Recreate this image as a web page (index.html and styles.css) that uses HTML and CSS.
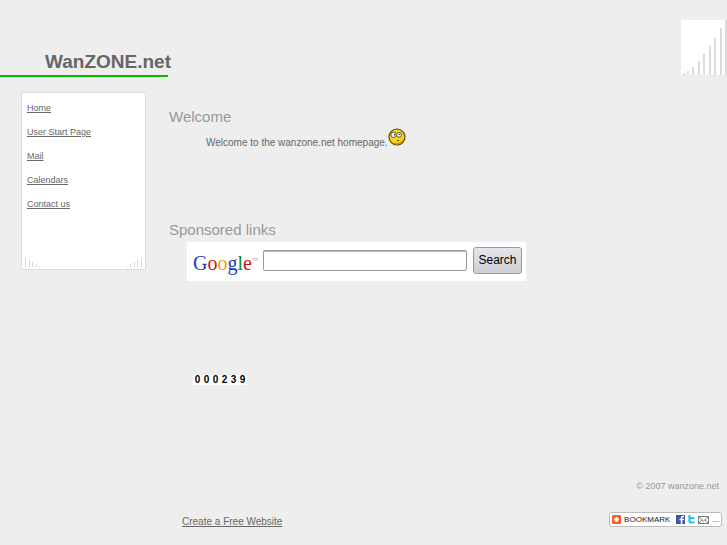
FILE: index.html
```html
<!DOCTYPE html>
<html lang="en">
<head>
  <meta charset="UTF-8">
  <meta name="viewport" content="width=device-width, initial-scale=1.0">
  <title>WanZONE.net</title>
  <link rel="stylesheet" href="styles.css">
</head>
<body>

  <header class="header">
    <div class="brand">
      <h1>WanZONE.net</h1>
    </div>
    <svg class="header-bars" width="46" height="56" viewBox="0 0 46 56" aria-hidden="true">
      <rect width="46" height="56" fill="#fff"/>
      <g fill="#dcdcdc">
        <rect x="2" y="53" width="2" height="2"/>
        <rect x="6" y="51" width="2" height="4"/>
        <rect x="11" y="47" width="2" height="8"/>
        <rect x="17" y="41" width="2" height="14"/>
        <rect x="22" y="34" width="2" height="21"/>
        <rect x="28" y="26" width="2" height="29"/>
        <rect x="33" y="18" width="2" height="37"/>
        <rect x="39" y="8" width="2" height="47"/>
        <rect x="44" y="0" width="2" height="55"/>
      </g>
      <path d="M0 55.5H46" stroke="#e8e8e8"/>
    </svg>
  </header>

  <div class="columns">
    <nav class="menu">
      <ul>
        <li><a href="#">Home</a></li>
        <li><a href="#">User Start Page</a></li>
        <li><a href="#">Mail</a></li>
        <li><a href="#">Calendars</a></li>
        <li><a href="#">Contact us</a></li>
      </ul>
      <div class="menu-bars">
        <svg width="15" height="10" viewBox="0 0 15 10" fill="#d8d8d8" aria-hidden="true">
          <rect x="0" y="0" width="1" height="10"/>
          <rect x="4" y="3" width="1" height="7"/>
          <rect x="7" y="5" width="1" height="5"/>
          <rect x="11" y="7" width="1" height="3"/>
          <rect x="14" y="9" width="1" height="1"/>
        </svg>
        <svg width="15" height="10" viewBox="0 0 15 10" fill="#d8d8d8" aria-hidden="true">
          <rect x="0" y="9" width="1" height="1"/>
          <rect x="3" y="7" width="1" height="3"/>
          <rect x="7" y="5" width="1" height="5"/>
          <rect x="10" y="3" width="1" height="7"/>
          <rect x="14" y="0" width="1" height="10"/>
        </svg>
      </div>
    </nav>

    <main class="content">
      <section class="welcome">
        <h2>Welcome</h2>
        <p>
          Welcome to the wanzone.net homepage.
          <svg width="18" height="18" viewBox="0 0 18 18" role="img" aria-label="smiley">
            <circle cx="9" cy="9" r="8" fill="#f8d616" stroke="#574600" stroke-width="1.2"/>
            <path d="M16.500 8Q15 14 9 15Q5 15.500 3 13.500Q5 16.600 9 16.600Q16 16 16.500 8Z" fill="#d09a00"/>
            <circle cx="5.6" cy="6.8" r="2.7" fill="#fff" stroke="#5b543a"/>
            <circle cx="11" cy="6.8" r="2.4" fill="#fff" stroke="#5b543a"/>
            <circle cx="6.6" cy="6.8" r=".8" fill="#222"/>
            <circle cx="11.4" cy="6.4" r=".7" fill="#222"/>
            <path d="M9 12.500h2" stroke="#5f3e00"/>
          </svg>
        </p>
      </section>

      <section class="sponsored">
        <h2>Sponsored links</h2>
        <form class="search">
          <label for="q" class="google"><span class="blue">G</span><span class="red">o</span><span class="yellow">o</span><span class="blue">g</span><span class="green">l</span><span class="red">e</span><sup>™</sup></label>
          <input type="text" id="q" name="q">
          <button type="submit">Search</button>
        </form>
      </section>

      <div class="counter">
        <span>0</span><span>0</span><span>0</span><span>2</span><span>3</span><span>9</span>
      </div>
    </main>
  </div>

  <footer class="footer">
    <p>© 2007 wanzone.net</p>
    <div class="footer-links">
      <a href="#">Create a Free Website</a>
      <a href="#" class="bookmark">
        <svg width="9" height="9" viewBox="0 0 9 9" aria-hidden="true">
          <rect width="9" height="9" rx="1" fill="#f4602f"/>
          <path d="M4.500 2v5M2 4.500h5" stroke="#fff" stroke-width="2"/>
        </svg>
        <span class="bookmark-text">BOOKMARK</span>
        <svg width="9" height="9" viewBox="0 0 9 9" aria-hidden="true">
          <rect width="9" height="9" fill="#3b5998"/>
          <path d="M8 1.500H7Q5.500 1.500 5.500 3V9M3.500 4.500H8" fill="none" stroke="#fff" stroke-width="1.5"/>
        </svg>
        <svg width="7" height="9" viewBox="0 0 7 9" aria-hidden="true">
          <path d="M1.500 0V6Q1.500 7.500 3 7.500H6.500M1.500 3H6.500" fill="none" stroke="#1cc7e8" stroke-width="2.2"/>
        </svg>
        <svg width="11" height="8" viewBox="0 0 11 8" aria-hidden="true">
          <path d="M.5.500h10v7H.5ZL5.500 5L10.500.500M.5 7.500L4 4M10.500 7.500L7 4" fill="#fff" stroke="#777"/>
        </svg>
        <span>...</span>
      </a>
    </div>
  </footer>

</body>
</html>
```
FILE: styles.css
```css
body {
  margin: 0;
  background: #eee;
  color: #666;
  font-family: "Liberation Sans", Arial, Helvetica, sans-serif;
  font-size: 10px;
  line-height: 12px;
}

h1,
h2,
p,
ul {
  margin: 0;
  padding: 0;
}

a {
  color: #666;
}

/* Header */
.header {
  display: flex;
  justify-content: space-between;
  align-items: flex-start;
}

.brand {
  width: 168px;
  box-sizing: border-box;
  padding: 50px 0 1px 45px;
  border-bottom: 2px solid #0b0;
  white-space: nowrap;
}

.brand h1 {
  font-size: 19px;
  line-height: 24px;
}

.header-bars {
  display: block;
  margin-top: 20px;
}

/* Menu and content */
.columns {
  display: flex;
  align-items: flex-start;
  gap: 23px;
  padding: 15px 20px 0 21px;
}

.menu {
  width: 125px;
  box-sizing: border-box;
  padding: 3px 3px 2px;
  background: #fff;
  border: 1px solid #ddd;
}

.menu ul {
  list-style: none;
  padding-left: 2px;
  font-size: 9px;
  line-height: 24px;
}

.menu-bars {
  display: flex;
  justify-content: space-between;
  padding-top: 41px;
}

.content {
  flex: 1;
  padding-top: 16px;
}

.content h2 {
  color: #999;
  font-size: 15px;
  font-weight: normal;
  line-height: 18px;
}

.welcome p {
  display: flex;
  align-items: flex-end;
  padding: 2px 0 0 37px;
  line-height: 6px;
}

.sponsored {
  padding-top: 75px;
}

.search {
  display: flex;
  align-items: center;
  width: 339px;
  max-width: 100%;
  height: 39px;
  box-sizing: border-box;
  margin: 3px 0 0 18px;
  padding: 0 4px 3px 6px;
  background: #fff;
}

.google {
  width: 70px;
  font-family: "Liberation Serif", "Times New Roman", serif;
  font-size: 20px;
  line-height: 24px;
  padding-top: 6px;
}

.google sup {
  color: #999;
  font-size: 6px;
  line-height: 6px;
}

.blue {
  color: #1a41b8;
}

.red {
  color: #c5181c;
}

.yellow {
  color: #e0a800;
}

.green {
  color: #128a2c;
}

.search input {
  flex: 1;
  min-width: 0;
  height: 21px;
  box-sizing: border-box;
  margin-right: 6px;
  border: 1px solid #999;
  border-radius: 2px;
  box-shadow: inset 0 1px 0 #bbb;
}

.search button {
  width: 49px;
  height: 27px;
  padding: 0;
  border: 1px solid #999;
  border-radius: 3px;
  background: linear-gradient(#e4e5e9, #cccfd6);
  color: #000;
  font-family: inherit;
  font-size: 12px;
}

.counter {
  display: flex;
  width: 54px;
  margin: 94px 0 0 24px;
  background: #fff;
  color: #000;
  font-weight: bold;
  line-height: 10px;
}

.counter span {
  width: 9px;
  text-align: center;
}

/* Footer */
.footer {
  padding: 95px 5px 0 182px;
}

.footer p {
  padding-right: 3px;
  font-size: 9px;
  color: #999;
  text-align: right;
}

.footer-links {
  display: flex;
  justify-content: space-between;
  align-items: flex-end;
  padding-top: 20px;
  line-height: 11px;
}

.bookmark {
  display: flex;
  align-items: center;
  gap: 3px;
  padding: 1px 2px;
  background: #fff;
  border: 1px solid #bbb;
  border-radius: 3px;
  color: #222;
  font-size: 8px;
  text-decoration: none;
}

.bookmark-text {
  margin-right: 3px;
}
```
